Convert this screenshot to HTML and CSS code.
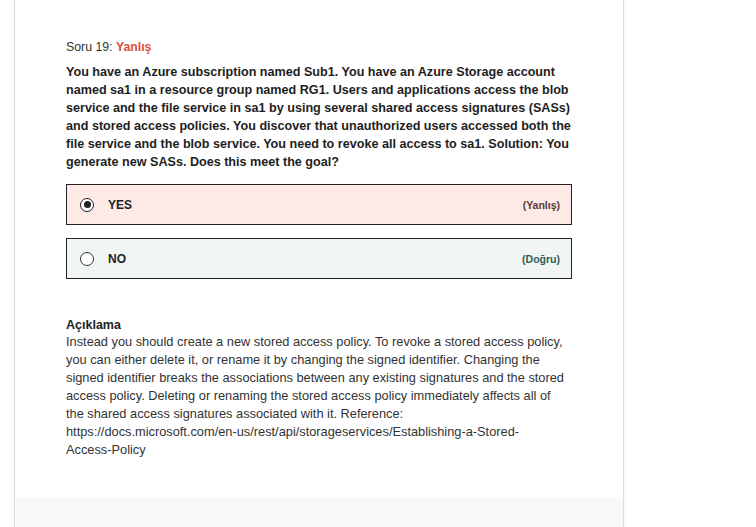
FILE: index.html
```html
<!DOCTYPE html>
<html lang="tr">
<head>
<meta charset="utf-8">
<link rel="stylesheet" href="styles.css">
</head>
<body>
<div class="card">
  <div class="content">
    <div class="qhead">Soru 19: <span class="wrong">Yanlış</span></div>
    <div class="question">You have an Azure subscription named Sub1. You have an Azure Storage account named sa1 in a resource group named RG1. Users and applications access the blob service and the file service in sa1 by using several shared access signatures (SASs) and stored access policies. You discover that unauthorized users accessed both the file service and the blob service. You need to revoke all access to sa1. Solution: You generate new SASs. Does this meet the goal?</div>
    <div class="options">
      <div class="option option-wrong">
        <span class="radio radio-checked"></span>
        <span class="label">YES</span>
        <span class="verdict verdict-wrong">(Yanlış)</span>
      </div>
      <div class="option option-right">
        <span class="radio"></span>
        <span class="label">NO</span>
        <span class="verdict verdict-right">(Doğru)</span>
      </div>
    </div>
    <div class="explain">
      <div class="explain-title">Açıklama</div>
      <div class="explain-body">Instead you should create a new stored access policy. To revoke a stored access policy, you can either delete it, or rename it by changing the signed identifier. Changing the signed identifier breaks the associations between any existing signatures and the stored access policy. Deleting or renaming the stored access policy immediately affects all of the shared access signatures associated with it. Reference: https://docs.microsoft.com/en-us/rest/api/storageservices/Establishing-a-Stored-<span class="nowrap">Access-Policy</span></div>
    </div>
  </div>
  <div class="footer"></div>
</div>
</body>
</html>
```
FILE: styles.css
```css
html, body {
  margin: 0;
  padding: 0;
  background: #ffffff;
  height: 100%;
  overflow: hidden;
}
body {
  font-family: "Liberation Sans", Arial, sans-serif;
  color: #222;
}
.card {
  margin-left: 14px;
  width: 608px;
  height: 100%;
  border-left: 1px solid #d9dee5;
  border-right: 1px solid #d9dee5;
  box-shadow: 0 0 3px rgba(120, 130, 150, 0.18);
  background: #fff;
  display: flex;
  flex-direction: column;
}
.content {
  padding: 38px 51px 0 51px;
  height: 497px;
  flex: none;
  box-sizing: border-box;
}
.qhead {
  font-size: 12.3px;
  line-height: 18px;
  color: #333;
}
.wrong {
  color: #e0503a;
  font-weight: bold;
}
.question {
  margin-top: 7px;
  font-size: 12.6px;
  line-height: 18px;
  font-weight: bold;
  color: #1e1e1e;
}
.options {
  margin-top: 13px;
  display: flex;
  flex-direction: column;
  gap: 13px;
}
.option {
  height: 41px;
  box-sizing: border-box;
  border: 1px solid #222;
  display: flex;
  align-items: center;
  padding: 0 11px 0 13px;
}
.option-wrong { background: #fde9e6; }
.option-right { background: #f1f5f4; }
.radio {
  width: 14px;
  height: 14px;
  border: 1px solid #333;
  border-radius: 50%;
  box-sizing: border-box;
  background: #fff;
  display: flex;
  align-items: center;
  justify-content: center;
}
.radio-checked {
  border: 1.5px solid #222;
}
.radio-checked::after {
  content: "";
  width: 7px;
  height: 7px;
  border-radius: 50%;
  background: #222;
}
.label {
  margin-left: 14px;
  font-size: 12px;
  font-weight: bold;
  color: #222;
}
.verdict {
  margin-left: auto;
  font-size: 10.5px;
  font-weight: bold;
}
.verdict-wrong { color: #5b3a36; }
.verdict-right { color: #2e5e5a; }
.explain {
  margin-top: 37px;
}
.explain-title {
  font-size: 12.5px;
  line-height: 18px;
  font-weight: bold;
  color: #222;
}
.explain-body {
  margin-top: -1px;
  padding-right: 4px;
  font-size: 12.8px;
  line-height: 18px;
  color: #333;
}
.nowrap {
  white-space: nowrap;
}
.footer {
  flex: 1;
  background: #f7f8fa;
}
```
